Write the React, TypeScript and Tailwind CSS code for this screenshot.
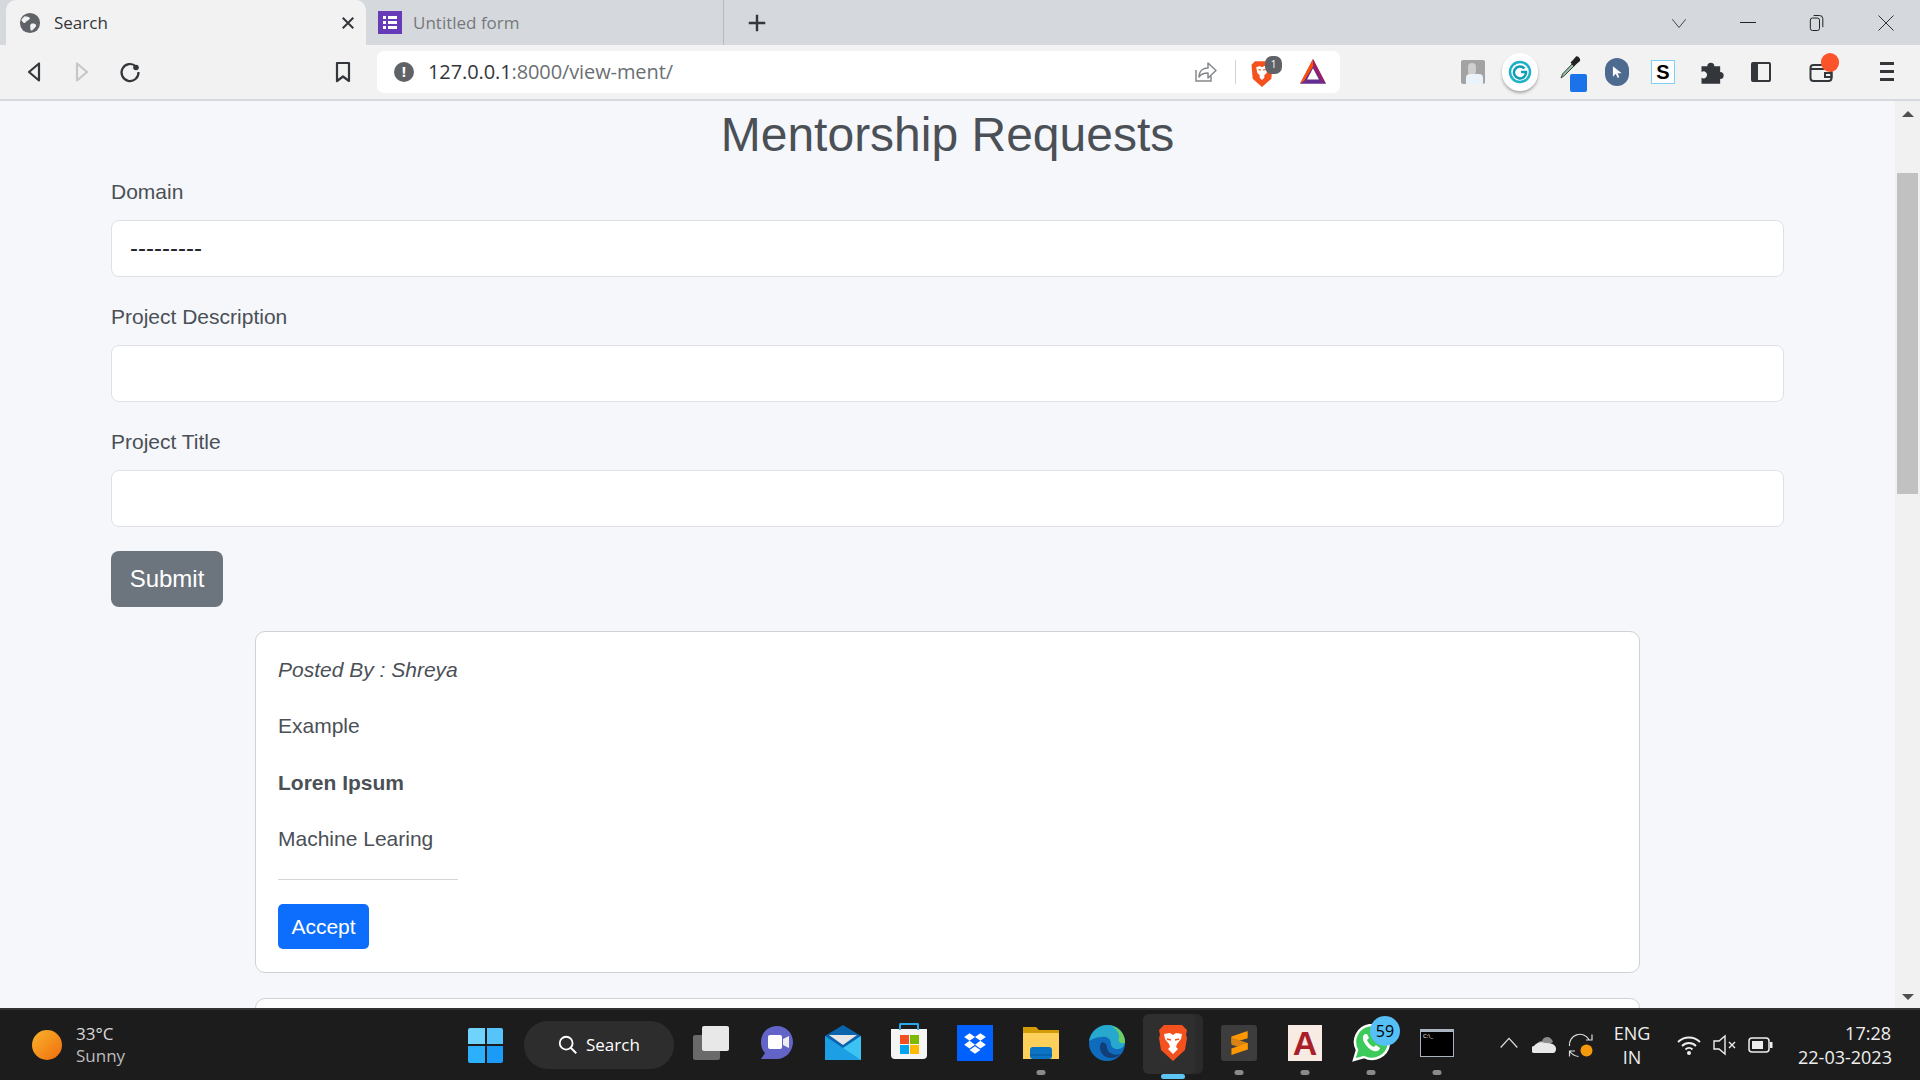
import { ReactNode } from "react";

const UI = "font-['Open_Sans','Noto_Sans',sans-serif]";
const PAGE = "font-['Liberation_Sans',Arial,sans-serif]";

function Svg({ size = 24, box = "0 0 24 24", children, className }: { size?: number; box?: string; children: ReactNode; className?: string }) {
  return (
    <svg width={size} height={size} viewBox={box} className={className} fill="none">
      {children}
    </svg>
  );
}

function Slot({ w, children, className = "" }: { w: string; children?: ReactNode; className?: string }) {
  return <div className={`flex shrink-0 items-center justify-center ${w} ${className}`}>{children}</div>;
}

function Tabs() {
  return (
    <div className="flex h-[45px] shrink-0 items-end bg-[#d5d9dd] pl-[6px] text-[17px]">
      <div className="flex h-[45px] w-[360px] items-center rounded-t-[10px] bg-[#f2f2f2] pl-[13px] pr-[9px]">
        <Svg size={22}>
          <circle cx="12" cy="12" r="11" fill="#5f6368" />
          <path d="M6 4.500c2 .5 4 0 5.500 1.500 1 1.500-1 3-2.500 3.500-1.500.5-1.500 2.500-3 2.500S3 10 2.500 8.500M13 13c2-1 4.500-.5 5.500 1s-1.500 3.500-3 5-3 2-3-.5-1-3.500.500-5.500Z" fill="#f2f2f2" />
        </Svg>
        <span className="ml-[13px] flex-1 text-[#33363a]">Search</span>
        <Svg size={18}>
          <path d="M5 5l14 14M19 5L5 19" stroke="#33363a" strokeWidth="2.600" />
        </Svg>
      </div>
      <div className="flex h-[45px] w-[358px] items-center border-r border-[#b8bcc0] pl-[12px]">
        <div className="flex h-[23px] w-[24px] flex-col justify-center gap-[2px] bg-[#673ab7] px-[5px]">
          {[0, 1, 2].map((i) => (
            <div key={i} className="flex h-[3px] gap-[2px]">
              <div className="w-[3px] bg-white" />
              <div className="flex-1 bg-white" />
            </div>
          ))}
        </div>
        <span className="ml-[11px] text-[#75787c]">Untitled form</span>
      </div>
      <Slot w="w-[66px]" className="h-[45px]">
        <Svg size={22}>
          <path d="M12 3v18M3 12h18" stroke="#33363a" strokeWidth="2.600" />
        </Svg>
      </Slot>
      <div className="flex-1" />
      <div className="flex h-[45px] items-center">
        <Slot w="w-[69px]">
          <Svg size={18}>
            <path d="M3 7l9 11 9-11" stroke="#333" strokeWidth="1.200" />
          </Svg>
        </Slot>
        <Slot w="w-[69px]">
          <div className="h-px w-[16px] bg-[#222]" />
        </Slot>
        <Slot w="w-[69px]">
          <Svg size={20}>
            <rect x="4" y="6" width="11" height="15" rx="2.500" stroke="#222" strokeWidth="1.200" />
            <path d="M8 3h7a4 4 0 0 1 4 4v10" stroke="#222" strokeWidth="1.200" />
          </Svg>
        </Slot>
        <Slot w="w-[69px]">
          <Svg size={20}>
            <path d="M3 3l18 18M21 3L3 21" stroke="#222" strokeWidth="1.100" />
          </Svg>
        </Slot>
      </div>
    </div>
  );
}

function Toolbar() {
  return (
    <div className="flex h-[56px] shrink-0 items-center border-b-2 border-[#d5d9dd] bg-[#f2f2f2] pb-[1px]">
      <div className="flex w-[377px] items-center pl-[10px]">
        <Slot w="w-[48px]">
          <Svg size={24}>
            <path d="M17 3.500v17L7 12Z" stroke="#33363a" strokeWidth="2.200" strokeLinejoin="round" />
          </Svg>
        </Slot>
        <Slot w="w-[48px]">
          <Svg size={24}>
            <path d="M7 3.500v17L17 12Z" stroke="#c5c7c9" strokeWidth="2.200" strokeLinejoin="round" />
          </Svg>
        </Slot>
        <Slot w="w-[48px]">
          <Svg size={24}>
            <path d="M18 6.500A8.500 8.500 0 1 0 20.500 12" stroke="#33363a" strokeWidth="2.200" />
            <circle cx="18" cy="7.500" r="2.800" fill="#33363a" />
          </Svg>
        </Slot>
        <div className="flex-1" />
        <Slot w="w-[48px]" className="mr-[10px]">
          <Svg size={24}>
            <path d="M6 3h12v18l-6-4.500L6 21Z" stroke="#33363a" strokeWidth="2.200" strokeLinejoin="round" />
          </Svg>
        </Slot>
      </div>
      <div className="flex h-[42px] w-[963px] items-center rounded-[7px] bg-white pl-[17px] pr-[13px]">
        <div className="flex h-[20px] w-[20px] items-center justify-center rounded-full bg-[#5f6368] text-[15px] font-bold leading-none text-white">!</div>
        <div className="ml-[14px] flex-1 text-[20px] tracking-[-0.1px]">
          <span className="text-[#33363a]">127.0.0.1</span>
          <span className="text-[#6b6f73]">:8000/view-ment/</span>
        </div>
        <Svg size={26} box="0 0 26 26">
          <path d="M4 11v11h15v-5" stroke="#85888b" strokeWidth="1.500" />
          <path d="M7 18c0-6 4-9 9-9V4l8 7.500-8 7.500v-5c-4 0-7 1-9 4Z" stroke="#85888b" strokeWidth="1.500" strokeLinejoin="round" />
        </Svg>
        <div className="ml-[17px] mr-[15px] h-[24px] w-px bg-[#d0d2d4]" />
        <div className="relative h-[28px] w-[24px]">
          <Svg size={28} className="absolute left-[-3px] top-[1px]">
            <path d="M6 2h12l3 3-1 12-8 7-8-7-1-12Z" fill="#f4511e" />
            <path d="M7 7l3-1 2 1 2-1 3 1-1 5-2 2v2l-2 2-2-2v-2l-2-2Z" fill="#fff" />
            <path d="M9 9l2 .5M15 9l-2 .5" stroke="#f4511e" />
          </Svg>
          <div className="absolute left-[14px] top-[-2px] flex h-[18px] w-[17px] items-center justify-center rounded-[7px] bg-[#5f6368] text-[10px] text-white">1</div>
        </div>
        <div className="ml-[24px]">
          <Svg size={28} box="0 0 26 26">
            <path d="M13 1L1 24h24Z" fill="#662d91" />
            <path d="M13 1L1 24l4-3L13 8Z" fill="#ff5000" />
            <path d="M13 1l12 23-4-3L13 8Z" fill="#9e1f63" />
            <path d="M13 9.500L7.500 20h11Z" fill="#fff" />
          </Svg>
        </div>
      </div>
      <div className="flex flex-1 items-center pl-[109px]">
        <Slot w="w-[47px]">
          <div className="relative h-[24px] w-[24px] rounded-[2px] bg-[#a3a3a3]">
            <div className="absolute left-[7px] top-[3px] h-[12px] w-[8px] rounded-full bg-[#cfcfcf]" />
            <div className="absolute bottom-0 left-[5px] h-[10px] w-[17px] rounded-t-[4px] bg-[#eaf2fa]" />
          </div>
        </Slot>
        <Slot w="w-[47px]">
          <div className="flex h-[38px] w-[36px] items-center justify-center rounded-full bg-white shadow-[0_2px_3px_rgba(0,0,0,0.3)]">
            <Svg size={24}>
              <circle cx="12" cy="12" r="10" stroke="#1db0c9" strokeWidth="2.500" />
              <path d="M16.500 8.500A6 6 0 1 0 18 12h-5" stroke="#0f9cb5" strokeWidth="2.500" />
            </Svg>
          </div>
        </Slot>
        <Slot w="w-[52px]">
          <div className="relative h-[32px] w-[32px]">
            <Svg size={24} className="absolute left-[6px] top-[-1px]">
              <path d="M2 23l1.500-4L13 9l2 2-9.500 9.500Z" fill="#8bc3a0" stroke="#444" strokeWidth="1" />
              <path d="M11.500 7.500L14 5l3-3.500c2-1 5 2.500 4 4.500l-3.500 3-2.500 2.500Z" fill="#222" />
            </Svg>
            <div className="absolute bottom-[-4px] right-[-2px] h-[18px] w-[17px] rounded-[2px] bg-[#1a73e8]" />
          </div>
        </Slot>
        <Slot w="w-[43px]">
          <div className="flex h-[28px] w-[24px] items-center justify-center rounded-full bg-[#4d6a8f]">
            <Svg size={14}>
              <path d="M5 2v18l5-5 3 7 3-1-3-7h7Z" fill="#fff" />
            </Svg>
          </div>
        </Slot>
        <Slot w="w-[50px]">
          <div className={`flex h-[24px] w-[24px] items-center justify-center border border-[#7fd0f5] bg-white text-[20px] font-bold text-black ${PAGE}`}>S</div>
        </Slot>
        <Slot w="w-[48px]">
          <Svg size={28}>
            <path d="M3 7h5a3 3 0 1 1 6 0h5v5a3 3 0 1 1 0 6v4H3v-5a3 3 0 1 0 0-5Z" fill="#33363a" />
          </Svg>
        </Slot>
        <Slot w="w-[50px]">
          <div className="flex h-[20px] w-[20px] rounded-[2px] border-2 border-[#33363a]">
            <div className="w-[5px] bg-[#33363a]" />
          </div>
        </Slot>
        <Slot w="w-[70px]" className="relative">
          <Svg size={24}>
            <rect x="1.500" y="5" width="21" height="16" rx="3" stroke="#33363a" strokeWidth="2" />
            <path d="M1.500 9h21M16 13h6.500v4H16Z" stroke="#33363a" strokeWidth="2" />
          </Svg>
          <div className="absolute left-[35px] top-[-7px] h-[19px] w-[18px] rounded-full bg-[#fb542b]" />
        </Slot>
        <Slot w="w-[61px]">
          <div className="flex h-[19px] w-[14px] flex-col justify-between">
            <div className="h-[3px] bg-[#33363a]" />
            <div className="h-[3px] bg-[#33363a]" />
            <div className="h-[3px] bg-[#33363a]" />
          </div>
        </Slot>
      </div>
    </div>
  );
}

function Field({ label, value }: { label: string; value?: string }) {
  return (
    <div className="mb-[24px]">
      <label className="mb-[14px] block h-[30px] leading-[32px]">{label}</label>
      {value ? (
        <select className="block h-[57px] w-full appearance-none rounded-[8px] border border-[#dee2e6] bg-white px-[18px] pb-[2px] text-[24px] text-[#212529] outline-none">
          <option>{value}</option>
        </select>
      ) : (
        <input className="block h-[57px] w-full rounded-[8px] border border-[#dee2e6] bg-white px-[18px] text-[24px] outline-none" />
      )}
    </div>
  );
}

function RequestCard() {
  return (
    <div className="mx-[144px] mb-[25px] rounded-[10px] border border-[#cfd1d3] bg-white px-[22px] pb-[23px] pt-[23px]">
      <div className="w-fit">
        <p className="mb-[26px] h-[30px] leading-[30px]"><i>Posted By : Shreya</i></p>
        <p className="mb-[26px] h-[30px] leading-[30px]">Example</p>
        <p className="mb-[26px] h-[30px] leading-[32px]"><b>Loren Ipsum</b></p>
        <p className="mb-[26px] h-[30px] leading-[32px]">Machine Learing</p>
        <hr className="mb-[24px] border-t border-[#d3d4d6]" />
        <button className="h-[45px] w-[91px] rounded-[5px] bg-[#0d6efd] text-[21px] text-white">Accept</button>
      </div>
    </div>
  );
}

function Page() {
  return (
    <div className="flex min-h-0 flex-1 overflow-hidden">
      <main className={`min-w-0 flex-1 overflow-hidden bg-[#f5f7fb] px-[111px] text-[21px] text-[#4b5056] ${PAGE}`}>
        <h1 className="mb-[16px] mt-[5px] h-[54px] text-center text-[48px] leading-[58px]">Mentorship Requests</h1>
        <Field label="Domain" value="---------" />
        <Field label="Project Description" />
        <Field label="Project Title" />
        <button className="mb-[24px] h-[56px] w-[112px] rounded-[8px] bg-[#6c757d] text-[24px] text-white">Submit</button>
        <RequestCard />
        {/* next card, only its top edge shows above the taskbar */}
        <div className="mx-[144px] h-[200px] rounded-[10px] border border-[#cfd1d3] bg-white" />
      </main>
      <div className="flex w-[25px] shrink-0 flex-col items-center bg-[#f1f1f1]">
        <div className="mt-[10px] h-0 w-0 border-x-[6px] border-b-[6px] border-x-transparent border-b-[#505050]" />
        <div className="mt-[56px] h-[321px] w-[21px] bg-[#c1c1c1]" />
        <div className="flex-1" />
        <div className="mb-[8px] h-0 w-0 border-x-[6px] border-t-[6px] border-x-transparent border-t-[#505050]" />
      </div>
    </div>
  );
}

function Dot({ color = "bg-[#8a8a8a]", w = "w-[9px]" }: { color?: string; w?: string }) {
  return <div className={`absolute bottom-[5px] left-1/2 h-[5px] -translate-x-1/2 rounded-full ${w} ${color}`} />;
}

function AppSlot({ children, dot }: { children: ReactNode; dot?: boolean }) {
  return (
    <div className="relative flex h-full w-[66px] shrink-0 items-center justify-center pb-[4px]">
      {children}
      {dot && <Dot />}
    </div>
  );
}

function Taskbar() {
  return (
    <div className={`flex h-[72px] shrink-0 items-center border-t-2 border-[#333] bg-[#1c1c1c] text-white ${UI}`}>
      <div className="ml-[32px] h-[30px] w-[30px] rounded-full bg-gradient-to-br from-[#f7b32b] to-[#ef6c0c]" />
      <div className="ml-[14px] w-[80px] text-[17px] leading-[22px] text-[#d8d8d8]">
        <div>33°C</div>
        <div className="text-[#bdbdbd]">Sunny</div>
      </div>
      <div className="ml-[312px] grid h-[35px] w-[35px] grid-cols-2 gap-[2px]">
        <div className="rounded-tl-[2px] bg-[#6fd3fb]" />
        <div className="rounded-tr-[2px] bg-[#56c4fa]" />
        <div className="rounded-bl-[2px] bg-[#2cb0fb]" />
        <div className="rounded-br-[2px] bg-[#1a9bf8]" />
      </div>
      <div className="ml-[21px] flex h-[48px] w-[150px] items-center rounded-full bg-[#2d2d2d] pl-[33px] text-[17px]">
        <Svg size={22}>
          <circle cx="10" cy="10" r="7" stroke="#fff" strokeWidth="2" />
          <path d="M15 15l6 6" stroke="#fff" strokeWidth="2.200" />
        </Svg>
        <span className="ml-[7px]">Search</span>
      </div>
      <div className="ml-[4px] flex h-full items-center">
        <AppSlot>
          <div className="relative h-[34px] w-[36px]">
            <div className="absolute bottom-0 left-0 h-[25px] w-[27px] rounded-[2px] bg-[#6a6a6a]" />
            <div className="absolute right-0 top-0 h-[25px] w-[27px] rounded-[2px] bg-[#e8e8e8]" />
          </div>
        </AppSlot>
        <AppSlot>
          <Svg size={36} box="0 0 36 36">
            <path d="M18 1c9 0 16 7 16 16s-7 17-16 17H2l4-6c-3-3-4-7-4-11C2 8 9 1 18 1Z" fill="#6264c7" />
            <rect x="9" y="10" width="14" height="14" rx="2" fill="#fff" />
            <path d="M24 14l6-3v12l-6-3Z" fill="#eee" />
          </Svg>
        </AppSlot>
        <AppSlot>
          <Svg size={38} box="0 0 38 38">
            <path d="M1 12L19 1l18 11v24H1Z" fill="#0a64ad" />
            <path d="M5 11h28L19 21Z" fill="#e6e6e6" />
            <path d="M1 12l18 12 18-12v24H1Z" fill="#1c9fe5" />
            <path d="M37 12v24L19 24Z" fill="#3bc3f3" />
          </Svg>
        </AppSlot>
        <AppSlot>
          <div className="relative mt-[2px] flex h-[30px] w-[36px] items-center justify-center rounded-b-[4px] bg-[#f5f5f5]">
            <div className="absolute left-[8px] top-[-6px] h-[7px] w-[20px] rounded-t-[2px] border-x-2 border-t-2 border-[#29a8ea]" />
            <div className="grid grid-cols-2 gap-[1px]">
              <div className="h-[9px] w-[9px] bg-[#f25022]" />
              <div className="h-[9px] w-[9px] bg-[#7fba00]" />
              <div className="h-[9px] w-[9px] bg-[#00a4ef]" />
              <div className="h-[9px] w-[9px] bg-[#ffb900]" />
            </div>
          </div>
        </AppSlot>
        <AppSlot>
          <div className="flex h-[36px] w-[36px] items-center justify-center bg-[#0061ff]">
            <Svg size={26}>
              <path d="M7 3l5 3.500L7 10 2 6.500ZM17 3l5 3.500L17 10l-5-3.500ZM7 10l5 3.500L7 17l-5-3.500ZM17 10l5 3.500L17 17l-5-3.500ZM12 15l5 3.500-5 3.500-5-3.500Z" fill="#fff" />
            </Svg>
          </div>
        </AppSlot>
        <AppSlot dot>
          <Svg size={38} box="0 0 38 38">
            <path d="M1 3h13l3 3h20v12H1Z" fill="#d39c07" />
            <path d="M1 9h36v26H1Z" fill="#fcd05b" />
            <rect x="8" y="23" width="22" height="12" rx="3" fill="#0a73c4" />
            <path d="M8 31h22" stroke="#0a5fa8" strokeWidth="1.500" />
          </Svg>
        </AppSlot>
        <AppSlot>
          <Svg size={38} box="0 0 38 38">
            <circle cx="19" cy="19" r="18" fill="#0f6cbd" />
            <path d="M1 17C3 7 11 1 20 1c9 0 17 7 17 17 0 4-3 7-7 7s-7-2-7-5c0-5-4-8-9-7-5 0-10 2-13 4Z" fill="#27a9cf" />
            <path d="M37 18c0-8-6-15-14-16 6 3 9 8 8 12-1 3 1 5 3 5 2 0 3 0 3-1Z" fill="#6ccf5f" />
            <path d="M14 18c-4 4-2 12 4 15 5 2 11 1 15-3-6 2-13 0-14-6 0-3-1-5-5-6Z" fill="#123f78" />
          </Svg>
        </AppSlot>
        <div className="relative flex h-full w-[66px] shrink-0 items-center justify-center pb-[4px]">
          <div className="absolute left-[11px] top-[4px] h-[60px] w-[52px] rounded-[6px] bg-[#2a2a2a]" />
          <div className="absolute left-[3px] top-[4px] h-[60px] w-[52px] rounded-[6px] bg-[#2f2f2f]" />
          <Svg size={38} box="0 0 38 38" className="relative">
            <path d="M10 1h18l5 5-1 5 1 3-2 12-12 11L7 26 5 14l1-3-1-5Z" fill="#f4511e" />
            <path d="M10 10l6-1 3 2 3-2 6 1-1 5-4 5-1 3 2 2-5 5-5-5 2-2-1-3-4-5Z" fill="#fff" />
            <path d="M13 15l4 1M25 15l-4 1" stroke="#f4511e" strokeWidth="1.500" />
          </Svg>
          <div className="absolute bottom-[1px] left-[21px] h-[5px] w-[24px] rounded-full bg-[#5cc6f5]" />
        </div>
        <AppSlot dot>
          <div className="flex h-[36px] w-[36px] items-center justify-center rounded-[3px] bg-[#3d3d3d]">
            <Svg size={26}>
              <path d="M20 1v6.500L5 12V6Z" fill="#ff9800" />
              <path d="M5 7l15 5v6L5 13.500Z" fill="#d98412" />
              <path d="M20 12v6L5 23v-6Z" fill="#ff9800" />
            </Svg>
          </div>
        </AppSlot>
        <AppSlot dot>
          <div className={`flex h-[36px] w-[34px] items-center justify-center bg-[#f8ebe4] text-[34px] font-bold leading-none text-[#a91e2b] ${PAGE}`}>A</div>
        </AppSlot>
        <AppSlot dot>
          <div className="relative">
            <Svg size={38} box="0 0 38 38">
              <path d="M2 36l3-10A17 17 0 1 1 12 33Z" fill="#3ccb5a" stroke="#fff" strokeWidth="2.500" />
              <path d="M13 10c-2 1-3 4-1 8s6 8 10 9c3 1 6-1 6-3l-4-3-2 2c-3-1-6-4-7-7l2-2-2-4Z" fill="#fff" />
            </Svg>
            <div className="absolute left-[18px] top-[-8px] flex h-[30px] w-[30px] items-center justify-center rounded-full bg-[#56bff5] text-[16px] text-black">59</div>
          </div>
        </AppSlot>
        <AppSlot dot>
          <div className="h-[28px] w-[34px] border border-[#a9b4c0] border-t-[3px] bg-black pl-[2px] text-[6px] leading-[9px] text-white">C:\_</div>
        </AppSlot>
      </div>
      <div className="flex-1" />
      <div className="flex items-center pr-[29px]">
        <Slot w="w-[38px]">
          <Svg size={20}>
            <path d="M2 15l10-11 10 11" stroke="#ddd" strokeWidth="1.500" />
          </Svg>
        </Slot>
        <Slot w="w-[34px]">
          <Svg size={26} box="0 0 26 26">
            <path d="M5 13a5 5 0 0 1 5-4c1-3 3-4 5-4 3 0 5 2 6 5l-8 5Z" fill="#8c8c8c" />
            <path d="M3 21a3.500 3.500 0 0 1-1-7c2-3 7-5 11-3 3 0 8 0 10 3 2 2 1 7-2 7Z" fill="#e8e8e8" />
          </Svg>
        </Slot>
        <Slot w="w-[38px]">
          <Svg size={26} box="0 0 26 26">
            <path d="M1.500 14A10.500 10.500 0 0 1 21 7.500M24 2.500V8h-6" stroke="#ddd" strokeWidth="1.200" />
            <path d="M1.500 24.500V19H7M1.500 19c2 3 5 5 9 5.500" stroke="#ddd" strokeWidth="1.200" />
            <circle cx="18.500" cy="18.500" r="6" fill="#f59a0c" />
          </Svg>
        </Slot>
        <div className="ml-[9px] w-[46px] text-center text-[18px] leading-[24px] text-[#eee]">
          <div>ENG</div>
          <div>IN</div>
        </div>
        <Slot w="w-[36px]" className="ml-[16px]">
          <Svg size={26} box="0 0 26 26">
            <path d="M2 10c6-6 16-6 22 0M6 14c4-4 10-4 14 0M9.500 17.500c2-2 5-2 7 0" stroke="#eee" strokeWidth="1.800" />
            <circle cx="13" cy="21" r="2" fill="#eee" />
          </Svg>
        </Slot>
        <Slot w="w-[36px]">
          <Svg size={26} box="0 0 26 26">
            <path d="M2 9h5l6-5v18l-6-5H2Z" stroke="#eee" strokeWidth="1.400" />
            <path d="M17 10l6 6M23 10l-6 6" stroke="#eee" strokeWidth="1.400" />
          </Svg>
        </Slot>
        <Slot w="w-[36px]">
          <Svg size={26} box="0 0 26 26">
            <rect x="1" y="6" width="20" height="14" rx="3" stroke="#eee" strokeWidth="1.500" />
            <rect x="4" y="9" width="11" height="8" fill="#eee" />
            <rect x="22" y="10" width="2.500" height="6" fill="#eee" />
          </Svg>
        </Slot>
        <div className="ml-[19px] w-[93px] whitespace-nowrap text-right text-[18px] leading-[24px] text-[#eee]">
          <div>17:28</div>
          <div>22-03-2023</div>
        </div>
      </div>
    </div>
  );
}

export default function App() {
  return (
    <div className={`flex h-screen w-full flex-col overflow-hidden ${UI}`}>
      <Tabs />
      <Toolbar />
      <Page />
      <Taskbar />
    </div>
  );
}
